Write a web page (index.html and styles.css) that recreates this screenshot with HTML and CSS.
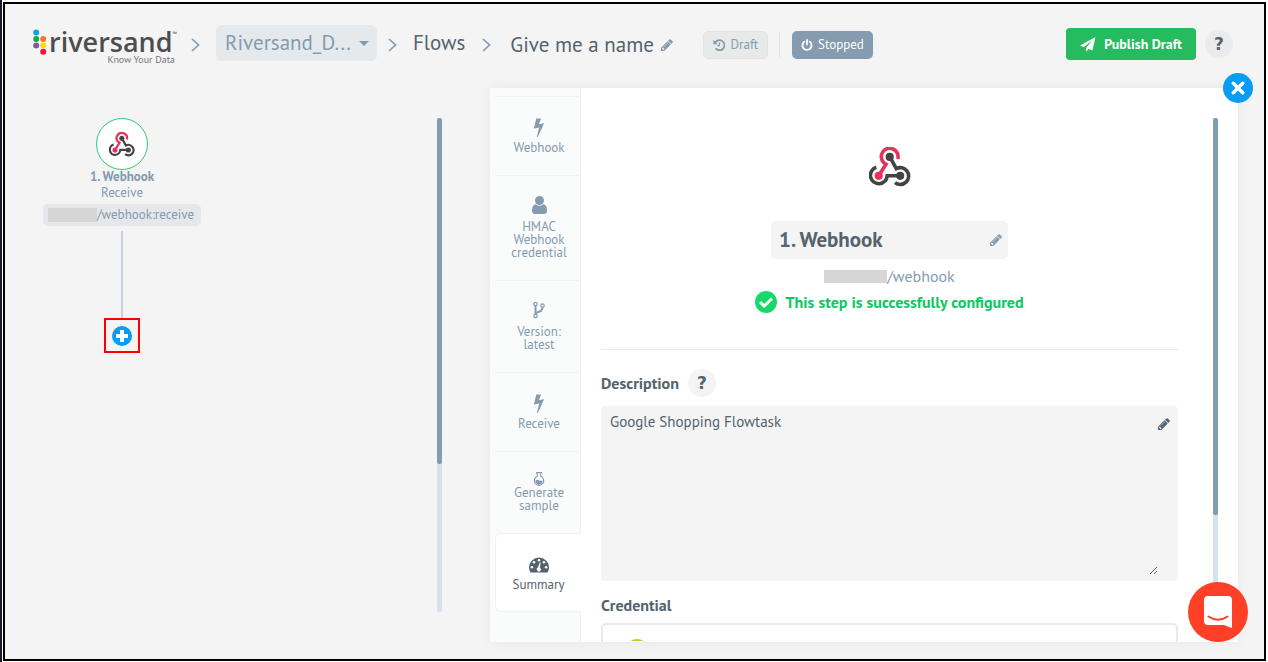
FILE: index.html
```html
<!DOCTYPE html>
<html lang="en">
<head>
<meta charset="utf-8">
<title>Flow editor</title>
<link rel="stylesheet" href="styles.css">
</head>
<body>
<svg class="defs" aria-hidden="true">
  <symbol id="pencil" viewBox="128 128 1536 1536"><path d="M491 1536l91-91-235-235-91 91v107h128v128h107zm523-928q0-22-22-22-10 0-17 7l-542 542q-7 7-7 17 0 22 22 22 10 0 17-7l542-542q7-7 7-17zm-54-192l416 416-832 832h-416v-416zm683 96q0 53-37 90l-166 166-416-416 166-165q36-38 90-38 53 0 91 38l235 234q37 39 37 91z"/></symbol>
  <symbol id="bolt" viewBox="448 0 900 1792"><path d="M1333 566q18 20 7 44l-540 1157q-13 25-42 25-4 0-14-2-17-5-25.500-19t-4.500-30l197-808-406 101q-4 1-12 1-18 0-31-11-18-15-13-39l201-825q4-14 16-23t28-9h328q19 0 32 12.500t13 29.500q0 8-5 18l-171 463 396-98q8-2 12-2 19 0 34 15z"/></symbol>
  <symbol id="chevron" viewBox="0 0 9 14"><path d="M1 1l6.500 6L1 13" fill="none" stroke="currentColor" stroke-width="1.700"/></symbol>
  <symbol id="hook" viewBox="0 0 42 40">
    <g fill="none" stroke-width="3.600">
      <path stroke="#e8315b" d="M28.800 11.900A8.400 8.400 0 1 0 15.200 16L17 17.200L9.700 28.800"/>
      <path stroke="#454442" d="M20.700 9.700L27.300 21.600A8.400 8.400 0 1 1 26 35.600M7.300 20.300A8.400 8.400 0 1 0 18.200 28.800H31"/>
    </g>
    <circle cx="20.700" cy="9.900" r="4.100" fill="#454442"/><circle cx="31.200" cy="28.800" r="4.100" fill="#454442"/><circle cx="9.700" cy="28.800" r="4.100" fill="#e8315b"/>
  </symbol>
</svg>
<div class="screen">
  <header class="topbar">
    <a class="logo" href="#" aria-label="riversand home">
      <svg class="dots" viewBox="0 0 14 26" aria-hidden="true"><circle cx="3.200" cy="3.500" r="3" fill="#09a5e0"/><circle cx="3.200" cy="10" r="3" fill="#12a84b"/><circle cx="10.200" cy="10" r="3" fill="#f9781f"/><circle cx="3.200" cy="16.500" r="3" fill="#7f58a5"/><circle cx="10.200" cy="16.500" r="3" fill="#ffd90f"/><circle cx="10.200" cy="22.700" r="3" fill="#f80f35"/></svg>
      <span class="brand"><span class="word">riversand<sup>™</sup></span><span class="tagline">Know Your Data</span></span>
    </a>
    <svg class="chev" aria-hidden="true"><use href="#chevron"/></svg>
    <div class="workspace">
      <select aria-label="Workspace"><option>Riversand_D...</option></select>
      <svg class="caret" viewBox="0 0 10 5" aria-hidden="true"><path d="M0 0h10L5 5z"/></svg>
    </div>
    <svg class="chev" aria-hidden="true"><use href="#chevron"/></svg>
    <a class="crumb" href="#">Flows</a>
    <svg class="chev" aria-hidden="true"><use href="#chevron"/></svg>
    <button class="flow-name">Give me a name <svg class="ic12"><use href="#pencil"/></svg></button>
    <div class="states">
      <button class="pill draft"><svg class="ic12" viewBox="0 0 12 12" aria-hidden="true"><path d="M2 4A5 5 0 1 1 2.600 9.400" fill="none" stroke="currentColor" stroke-width="1.800"/><path d="M.4.800v4.400h4.400z"/><path d="M6.500 3.500v3.200H4.300" fill="none" stroke="currentColor" stroke-width="1.200"/></svg>Draft</button>
      <button class="pill stopped"><svg class="ic12" viewBox="128 0 1536 1700" aria-hidden="true"><path d="M1664 896q0 156-61 298t-164 245-245 164-298 61-298-61-245-164-164-245-61-298q0-182 80.500-343t226.500-270q43-32 95.500-25t83.500 50q32 42 24.500 94.500t-49.500 84.500q-98 74-151.500 181t-53.500 228q0 104 40.500 198.500t109.500 163.500 163.500 109.500 198.500 40.500 198.500-40.500 163.500-109.500 109.500-163.500 40.500-198.500q0-121-53.500-228t-151.500-181q-42-32-49.500-84.500t24.500-94.500q31-43 84-50t95 25q146 109 226.500 270t80.500 343zm-640-768v640q0 52-38 90t-90 38-90-38-38-90v-640q0-52 38-90t90-38 90 38 38 90z"/></svg>Stopped</button>
    </div>
    <div class="actions">
      <button class="publish"><svg viewBox="0 0 16 15" aria-hidden="true"><path d="M15.500 0L0 8.500l3.800 1.700L12.500 3 6 11v3.800l2.400-2.900 4 1.600z"/></svg>Publish Draft</button>
      <button class="help" aria-label="Help">?</button>
    </div>
  </header>
  <main class="work">
    <section class="canvas" aria-label="Flow">
      <div class="node">
        <button class="disc" aria-label="Webhook step"><svg viewBox="0 0 42 40"><use href="#hook"/></svg></button>
        <strong>1. Webhook</strong>
        <span class="action">Receive</span>
        <span class="chip"><i class="mask"></i>/webhook:receive</span>
        <span class="wire"></span>
        <span class="add-frame"><button class="add" aria-label="Add step"><svg viewBox="0 0 20 20"><path d="M10 4v12M4 10h12" stroke="#fff" stroke-width="4"/></svg></button></span>
      </div>
      <div class="track"><div class="thumb"></div></div>
    </section>
    <section class="panel" aria-label="Step details">
      <nav class="tabs">
        <button class="tab"><svg class="i-bolt"><use href="#bolt"/></svg>Webhook</button>
        <button class="tab"><svg class="i-user" viewBox="256 128 1280 1536"><path d="M1536 1399q0 109-62.500 187t-150.500 78h-854q-88 0-150.500-78t-62.500-187q0-85 8.500-160.500t31.500-152 58.500-131 94-89 134.500-34.500q131 128 313 128t313-128q76 0 134.500 34.500t94 89 58.500 131 31.500 152 8.500 160.500zm-256-887q0 159-112.500 271.500t-271.500 112.500-271.500-112.500-112.500-271.500 112.500-271.500 271.500-112.500 271.500 112.500 112.500 271.500z"/></svg>HMAC Webhook credential</button>
        <button class="tab"><svg class="i-fork" viewBox="0 0 12 17"><g fill="none" stroke="currentColor"><path stroke-width="2" d="M2.500 4v9M9.500 5c0 4-1.500 4.500-4 5.400-2 .7-3 1.100-3 2.600"/><circle cx="2.500" cy="2.500" r="1.700" stroke-width="1.200" fill="#fafcfb"/><circle cx="2.500" cy="14.500" r="1.700" stroke-width="1.200" fill="#fafcfb"/><circle cx="9.500" cy="4" r="1.700" stroke-width="1.200" fill="#fafcfb"/></g></svg>Version: latest</button>
        <button class="tab"><svg class="i-bolt"><use href="#bolt"/></svg>Receive</button>
        <button class="tab"><svg class="i-flask" viewBox="0 0 12 14"><path fill="none" stroke="currentColor" stroke-width="1.100" d="M3 .6h6M4.300.6v3.700a4.700 4.700 0 1 0 3.400 0V.6"/><path d="M2.500 8.200q1.700-1 3.500 0t3.500 0A3.600 3.600 0 1 1 2.500 8.200z"/></svg>Generate sample</button>
        <button class="tab active" aria-current="page"><svg class="i-dash" viewBox="0 0 20 16"><path d="M10 .5A10 10 0 0 0 0 10.500q0 2.800 1.500 5h17q1.500-2.200 1.500-5A10 10 0 0 0 10 .5z"/><g fill="#fff"><circle cx="10" cy="3.300" r="1.300"/><circle cx="5" cy="5.300" r="1.300"/><circle cx="15" cy="5.300" r="1.300"/><circle cx="2.900" cy="10.300" r="1.300"/><circle cx="17.100" cy="10.300" r="1.300"/><path d="M10.700 5.500l.9.200-.8 5A2 2 0 1 1 9 10.600z"/></g></svg>Summary</button>
      </nav>
      <div class="details">
        <div class="summary">
          <svg class="hero" viewBox="0 0 42 40" aria-hidden="true"><use href="#hook"/></svg>
          <button class="title">1. Webhook<svg class="ic12"><use href="#pencil"/></svg></button>
          <p class="path"><i class="mask"></i>/webhook</p>
          <p class="status"><svg viewBox="0 0 22 22" aria-hidden="true"><circle cx="11" cy="11" r="11" fill="#16d96b"/><path d="M5 11l4.200 4 7.800-7.500" fill="none" stroke="#fff" stroke-width="3"/></svg>This step is successfully configured</p>
        </div>
        <div class="label-row"><label for="desc">Description</label><button class="help" aria-label="About the description">?</button></div>
        <div class="memo"><textarea id="desc">Google Shopping Flowtask</textarea><svg class="ic12"><use href="#pencil"/></svg></div>
        <h2 id="cred">Credential</h2>
        <button class="credential" aria-labelledby="cred"><svg viewBox="0 0 24 24"><circle cx="12" cy="12" r="12" fill="#b5cf2c"/><path d="M5 3h14" stroke="#fff" stroke-width="2"/></svg></button>
      </div>
      <div class="rail"><div class="track"><div class="thumb"></div></div></div>
      <button class="close" aria-label="Close"><svg viewBox="0 0 12 12"><path d="M2 2l8 8M10 2l-8 8" stroke="#fff" stroke-width="3" stroke-linecap="round"/></svg></button>
    </section>
  </main>
  <button class="chat" aria-label="Open chat"><svg viewBox="0 0 28 32"><path fill="#fff" d="M4 0h20q4 0 4 4v28l-8-3H4q-4 0-4-4V4q0-4 4-4z"/><path d="M4.500 20.500q9.500 6.500 19 0" fill="none" stroke="#ff4027" stroke-width="2" stroke-linecap="round"/></svg></button>
</div>
</body>
</html>
```
FILE: styles.css
```css
* { box-sizing: border-box; }
body {
  margin: 0;
  height: 100vh;
  padding: 2px 2px 1px 1px;
  border-left: 2px solid #1b1b26;
  background: #fff;
  color: #54636d;
  font: 15px/20px "PT Sans", "Noto Sans", sans-serif;
}
button, select, textarea { font: inherit; color: inherit; border: 0; margin: 0; padding: 0; background: none; }
button { cursor: pointer; }
a { color: inherit; text-decoration: none; }
svg { fill: currentColor; flex: none; display: block; }
.defs { position: absolute; width: 0; height: 0; }
.ic12 { width: 12px; height: 12px; }

.screen {
  position: relative;
  height: 100%;
  display: flex;
  flex-direction: column;
  border: 2px solid #000;
  background: #f4f4f4;
}
.topbar {
  display: flex;
  align-items: center;
  height: 84px;
  flex: none;
  padding: 0 31px 6px 28px;
}
.logo { display: flex; color: #4d4d4f; margin-top: 8px; }
.dots { width: 14px; height: 26px; }
.brand { display: flex; flex-direction: column; margin-left: 2px; width: 130px; }
.word { font: 600 27px/25px "Open Sans", sans-serif; white-space: nowrap; }
.word sup { font-size: 6px; line-height: 6px; vertical-align: 16px; }
.tagline { font-size: 10px; line-height: 12px; text-align: right; padding-right: 4px; color: #77777a; }
.chev { width: 9px; height: 14px; color: #849bb0; margin-top: 4px; }
.logo + .chev { margin-left: 12px; }
.workspace { position: relative; margin: 0 11px 0 16px; }
.workspace select {
  display: block;
  appearance: none;
  width: 161px;
  height: 36px;
  padding: 0 9px;
  border-radius: 6px;
  background: #e5e9ec;
  color: #849bb0;
  font-size: 21px;
  line-height: 32px;
}
.caret { position: absolute; right: 8px; top: 16px; width: 10px; height: 5px; color: #7f99ae; }
.crumb { font-size: 21px; line-height: 24px; margin: 0 17px 0 16px; }
.flow-name { display: flex; align-items: center; gap: 7px; font-size: 21px; margin: 4px 0 0 19px; white-space: nowrap; }
.flow-name svg, .title svg { color: #849bb0; }
.states { display: flex; align-items: center; margin: 4px 0 0 30px; }
.pill { display: flex; align-items: center; justify-content: center; height: 28px; border-radius: 5px; font-size: 13px; }
.draft { width: 65px; gap: 6px; background: #e7eae9; border: 1px solid #e0e5e4; color: #849bb0; margin-right: 11px; }
.stopped { position: relative; width: 81px; gap: 5px; background: #849bb0; color: #fff; margin-left: 13px; }
.stopped::before { content: ""; position: absolute; left: -13px; top: 1px; height: 26px; border-left: 1px solid #e4e7e9; }
.actions { display: flex; align-items: center; gap: 9px; margin: 2px 0 0 auto; }
.publish {
  display: flex;
  align-items: center;
  gap: 8px;
  height: 32px;
  padding: 0 14px;
  border-radius: 4px;
  background: #24bc5f;
  color: #fff;
  font-size: 14px;
  font-weight: 700;
}
.publish svg { width: 16px; height: 15px; }
.help { width: 28px; height: 28px; border-radius: 50%; background: #e9ebec; font: 700 17px/28px "DejaVu Sans", sans-serif; }

.work { flex: 1; min-height: 0; display: grid; grid-template-columns: 485fr 748fr; padding: 0 26px 17px 0; }
.canvas { display: flex; justify-content: space-between; padding: 30px 48px 30px 38px; }
.node { display: flex; flex-direction: column; align-items: center; align-self: flex-start; color: #849bb0; font-size: 13px; line-height: 16px; }
.disc { width: 52px; height: 52px; display: grid; place-items: center; border: 1px solid #2ecc71; border-radius: 50%; background: #fff; }
.disc svg { width: 26px; height: 25px; }
.node strong { margin-top: -1px; }
.chip { display: flex; align-items: center; height: 22px; margin-top: 3px; padding: 0 7px 0 5px; border-radius: 5px; background: #e5e7eb; }
.mask { width: 49px; height: 14px; background: #d6d6d6; }
.wire { width: 2px; height: 87px; margin-top: 5px; background: #c9d1dd; }
.add-frame { width: 36px; height: 35px; border: 2px solid #f00; display: grid; place-items: center; }
.add { width: 20px; height: 20px; border-radius: 50%; background: #069df3; }
.track { width: 5px; height: 100%; border-radius: 2px; background: #d6e1e8; }
.thumb { height: 70%; border-radius: 2px; background: #839db0; }

.panel {
  position: relative;
  display: flex;
  min-height: 0;
  background: #fff;
  box-shadow: 0 0 12px rgba(0, 0, 0, .06);
}
.tabs { width: 91px; flex: none; padding: 8px 0 0 5px; background: #fafcfb; border-right: 1px solid #f0f2f2; }
.tab {
  display: flex;
  flex-direction: column;
  align-items: center;
  width: 86px;
  padding: 20px 9px 21px 11px;
  border-top: 1px solid #eff2f1;
  color: #849bb0;
  font-size: 13px;
  line-height: 13px;
}
.tab.active { height: 79px; padding: 20px 10px 21px; border: 1px solid #eff2f1; border-right: 0; border-radius: 6px 0 0 6px; background: #fff; color: #54636d; }
.i-bolt { width: 10px; height: 20px; margin-bottom: 4px; }
.i-user { width: 15px; height: 18px; margin-bottom: 6px; }
.i-fork { width: 12px; height: 18px; margin-bottom: 6px; }
.i-flask { width: 12px; height: 14px; }
.i-dash { width: 20px; height: 16px; margin: 3px 0 5px; }

.details { flex: 1; min-width: 0; overflow: hidden; padding: 59px 35px 0 20px; }
.summary { display: flex; flex-direction: column; align-items: center; padding-bottom: 36px; border-bottom: 1px solid #e8eaeb; }
.summary p { margin: 0; }
.hero { width: 42px; height: 40px; }
.title {
  display: flex;
  align-items: center;
  justify-content: space-between;
  width: 237px;
  height: 38px;
  margin-top: 34px;
  padding: 0 6px 0 8px;
  border-radius: 5px;
  background: #f4f4f4;
  font-size: 21px;
  font-weight: 700;
}
.path { display: flex; align-items: center; color: #849bb0; font-size: 16px; line-height: 20px; }
.summary .path { margin-top: 7px; }
.path .mask { width: 63px; height: 13px; }
.status { display: flex; align-items: center; gap: 8px; color: #08c964; font-size: 16px; font-weight: 700; line-height: 20px; }
.summary .status { margin-top: 5px; }
.status svg { width: 22px; height: 22px; }
.label-row { display: flex; align-items: center; gap: 9px; margin: 19px 0 9px; font-size: 16px; font-weight: 700; }
.label-row .help { background: #f4f4f4; }
.memo { display: flex; justify-content: space-between; height: 175px; padding: 6px 8px 6px 0; border-radius: 4px; background: #f4f4f4; }
.memo textarea { width: calc(100% - 12px); padding: 0 9px; resize: both; outline: 0; }
.memo svg { margin-top: 6px; }
.details h2 { margin: 14px 0 8px; font-size: 16px; line-height: 20px; }
.credential { display: block; width: 100%; height: 56px; padding: 14px 22px; border: 2px solid #e8eaea; border-radius: 5px; }
.credential svg { width: 24px; height: 24px; }
.rail { width: 25px; padding: 30px 20px 0 0; }
.rail .thumb { height: 397px; max-height: 80%; }
.close { position: absolute; top: -15px; right: -15px; width: 30px; height: 30px; border-radius: 50%; background: #069df3; display: grid; place-items: center; }
.close svg { width: 14px; height: 14px; }
.chat { position: absolute; right: 16px; bottom: 17px; width: 60px; height: 60px; border-radius: 50%; background: #ff4027; display: grid; place-items: center; }
.chat svg { width: 28px; height: 32px; }
```
